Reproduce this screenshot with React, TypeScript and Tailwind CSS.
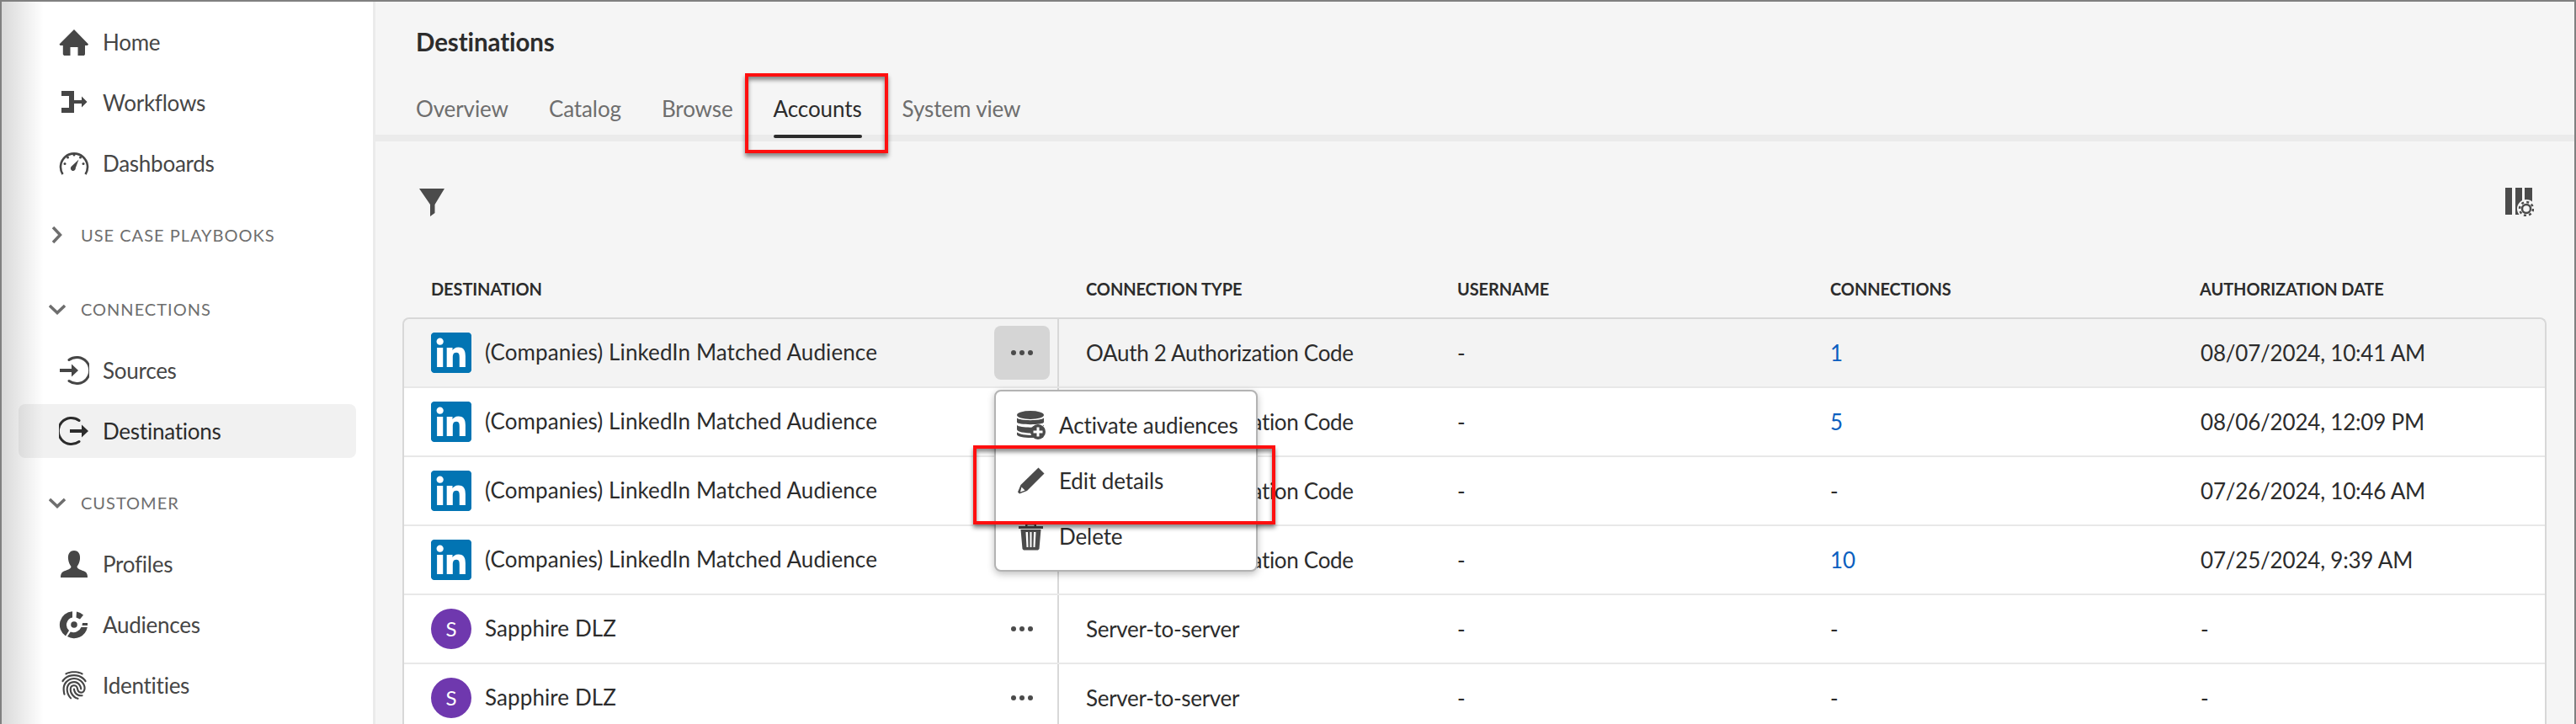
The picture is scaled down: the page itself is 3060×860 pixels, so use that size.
import { IoFingerPrint } from 'react-icons/io5';

const linkedinPath =
  'M20.447 20.452h-3.554v-5.569c0-1.328-.027-3.037-1.852-3.037-1.853 0-2.136 1.445-2.136 2.939v5.667H9.351V9h3.414v1.561h.046c.477-.9 1.637-1.85 3.37-1.85 3.601 0 4.267 2.37 4.267 5.455v6.286zM5.337 7.433c-1.144 0-2.063-.926-2.063-2.065 0-1.138.92-2.063 2.063-2.063 1.14 0 2.064.925 2.064 2.063 0 1.139-.925 2.065-2.064 2.065zm1.782 13.019H3.555V9h3.564v11.452zM22.225 0H1.771C.792 0 0 .774 0 1.729v20.542C0 23.227.792 24 1.771 24h20.451C23.2 24 24 23.227 24 22.271V1.729C24 .774 23.2 0 22.222 0h.003z';

function Icon({ children }: { children: React.ReactNode }) {
  return (
    <svg viewBox="0 0 36 36" className="w-9 h-9 shrink-0 fill-current">
      {children}
    </svg>
  );
}

const HomeIcon = () => (
  <Icon>
    <path d="M18 3 35 20.500 34 22H31V32.500L30 34H22.500V24H13.500V34H6L4.800 32.500V22H1.500L0.500 20.500Z" />
  </Icon>
);
const WorkflowIcon = () => (
  <Icon>
    <path d="M3 4H18V15H27V10.500L33.500 17 27 23.500V19H18V30H3V24H12V10H3Z" />
  </Icon>
);
const GaugeIcon = () => (
  <Icon>
    <path d="M4.500 31A16 16 0 1 1 31.500 31" fill="none" stroke="currentColor" strokeWidth="2.600" />
    <circle cx="18" cy="8" r="1.500" />
    <circle cx="10.500" cy="11" r="1.500" />
    <circle cx="25.500" cy="11" r="1.500" />
    <circle cx="7" cy="18.500" r="1.500" />
    <circle cx="29" cy="18.500" r="1.500" />
    <path d="M23.500 13.500 19.800 23.500A3 3 0 1 1 15 21.500Z" />
  </Icon>
);
const SourcesIcon = () => (
  <Icon>
    <path d="M12 5.500A15.500 15.500 0 1 1 12 30.500" fill="none" stroke="currentColor" strokeWidth="3" strokeLinecap="round" />
    <path d="M1 16H15V10.500L23 18 15 25.500V20H1Z" />
  </Icon>
);
const DestinationIcon = () => (
  <Icon>
    <path d="M24 5.500A15.500 15.500 0 1 0 24 30.500" fill="none" stroke="currentColor" strokeWidth="3" strokeLinecap="round" />
    <path d="M13 16H27V10.500L35 18 27 25.500V20H13Z" />
  </Icon>
);
const ProfileIcon = () => (
  <Icon>
    <path d="M18 2C23.500 2 25.500 6.500 25 12 24.600 16 23 19 21.500 21 21.500 24 27 25 31 27 33.500 28.500 34 31 34 34H2C2 31 2.500 28.500 5 27 9 25 14.500 24 14.500 21 13 19 11.400 16 11 12 10.500 6.500 12.500 2 18 2Z" />
  </Icon>
);
const AudienceIcon = () => (
  <Icon>
    <path d="M16 2.200V9.500A9 9 0 0 0 12 25L8 31.500A16 16 0 0 1 16 2.200Z" />
    <path d="M21 2.500A16 16 0 0 1 29 6.500L25 11.500 20.500 9.500Z" />
    <path d="M28 16H34V19H27.500ZM33.800 21A16 16 0 0 1 10 32L13.800 26.500A10 10 0 0 0 26.500 21Z" />
    <circle cx="18" cy="18" r="3.800" />
  </Icon>
);

function Ellipsis() {
  return (
    <span className="flex items-center gap-[4px] text-[#4b4b4b]">
      <span className="w-[6px] h-[6px] rounded-full bg-current" />
      <span className="w-[6px] h-[6px] rounded-full bg-current" />
      <span className="w-[6px] h-[6px] rounded-full bg-current" />
    </span>
  );
}

function NavItem({ label, icon, active }: { label: string; icon: React.ReactNode; active?: boolean }) {
  return (
    <div className="h-[72px] mx-[20px] flex items-center">
      <div
        className={`w-full h-[64px] rounded-lg flex items-center gap-[16px] pl-[48px] tracking-[-0.25px] ${
          active ? 'bg-[#f1f1f1] text-[#2c2c2c]' : 'text-[#464646]'
        }`}
      >
        {icon}
        <span>{label}</span>
      </div>
    </div>
  );
}

function SectionHead({ label, open }: { label: string; open?: boolean }) {
  return (
    <div className="h-[30px] flex items-center text-[#6e6e6e] text-[20px] tracking-[1px]">
      <span className="w-[94px] flex justify-end pr-[18px]">
        <svg viewBox="0 0 20 20" className="w-5 h-5 fill-none stroke-current stroke-[3.500]">
          {open ? <path d="M1 6 10 14.500 19 6" /> : <path d="M5 1 13.500 10 5 19" />}
        </svg>
      </span>
      <span>{label}</span>
    </div>
  );
}

function Sidebar() {
  return (
    <aside className="w-[441px] h-full shrink-0 bg-white pt-[12px] text-[26px]">
      <NavItem label="Home" icon={<HomeIcon />} />
      <NavItem label="Workflows" icon={<WorkflowIcon />} />
      <NavItem label="Dashboards" icon={<GaugeIcon />} />
      <div className="mt-[34px]">
        <SectionHead label="USE CASE PLAYBOOKS" open={false} />
      </div>
      <div className="mt-[58px] mb-[22px]">
        <SectionHead label="CONNECTIONS" open />
      </div>
      <NavItem label="Sources" icon={<SourcesIcon />} />
      <NavItem label="Destinations" icon={<DestinationIcon />} active />
      <div className="mt-[34px] mb-[22px]">
        <SectionHead label="CUSTOMER" open />
      </div>
      <NavItem label="Profiles" icon={<ProfileIcon />} />
      <NavItem label="Audiences" icon={<AudienceIcon />} />
      <NavItem
        label="Identities"
        icon={
          <span className="w-9 h-9 shrink-0 flex items-center justify-center text-[36px]">
            <IoFingerPrint />
          </span>
        }
      />
    </aside>
  );
}

type Row = {
  kind: 'linkedin' | 'sapphire';
  name: string;
  type: string;
  connections: string;
  date: string;
};

const auth = 'OAuth 2 Authorization Code';
const rows: Row[] = [
  { kind: 'linkedin', name: '(Companies) LinkedIn Matched Audience', type: auth, connections: '1', date: '08/07/2024, 10:41 AM' },
  { kind: 'linkedin', name: '(Companies) LinkedIn Matched Audience', type: auth, connections: '5', date: '08/06/2024, 12:09 PM' },
  { kind: 'linkedin', name: '(Companies) LinkedIn Matched Audience', type: auth, connections: '-', date: '07/26/2024, 10:46 AM' },
  { kind: 'linkedin', name: '(Companies) LinkedIn Matched Audience', type: auth, connections: '10', date: '07/25/2024, 9:39 AM' },
  { kind: 'sapphire', name: 'Sapphire DLZ', type: 'Server-to-server', connections: '-', date: '-' },
  { kind: 'sapphire', name: 'Sapphire DLZ', type: 'Server-to-server', connections: '-', date: '-' },
];

const gridCols = 'grid grid-cols-[778px_441px_443px_439px_1fr]';

function TableRow({ row, first }: { row: Row; first: boolean }) {
  return (
    <div
      className={`${gridCols} h-[82px] border-b-2 border-[#e8e8e8] items-stretch ${
        first ? 'bg-[#f3f3f3] rounded-t-lg' : 'bg-white'
      }`}
    >
      <div className="flex items-center pl-[32px] pr-[9px] border-r-2 border-[#d8d8d8]">
        {row.kind === 'linkedin' ? (
          <svg viewBox="0 0 24 24" className="w-12 h-12 shrink-0 bg-white rounded-[3px]">
            <path d={linkedinPath} fill="#0274b3" />
          </svg>
        ) : (
          <span className="w-12 h-12 shrink-0 rounded-full bg-[#6f38ae] text-white flex items-center justify-center text-[24px]">
            S
          </span>
        )}
        <span className="ml-[16px] flex-1 tracking-[0.1px] pb-[1px]">{row.name}</span>
        <span
          className={`w-[66px] h-[64px] rounded-lg flex items-center justify-center ${
            first ? 'bg-[#d5d5d5]' : ''
          }`}
        >
          <Ellipsis />
        </span>
      </div>
      <div className="flex items-center pl-[32px] tracking-[-0.3px]">{row.type}</div>
      <div className="flex items-center pl-[32px]">-</div>
      <div className={`flex items-center pl-[32px] ${row.connections === '-' ? '' : 'text-[#0b5fc0]'}`}>
        {row.connections}
      </div>
      <div className="flex items-center pl-[33px] tracking-[-0.2px]">{row.date}</div>
    </div>
  );
}

function Main() {
  const headers = ['Destination', 'Connection type', 'Username', 'Connections', 'Authorization date'];
  return (
    <main className="flex-1 min-w-0 h-full bg-[#f5f5f5] border-l-[3px] border-[#ebebeb] text-[#2c2c2c]">
      <header className="h-[166px] border-b-[8px] border-[#ebebeb] pl-[48px] relative">
        <h1 className="pt-[29px] h-[109px] text-[29.5px] font-bold leading-[38px] tracking-[-0.1px]">Destinations</h1>
        <nav className="flex gap-12 text-[26px] leading-[36px] text-[#6e6e6e] tracking-[-0.1px]">
          <span>Overview</span>
          <span>Catalog</span>
          <span>Browse</span>
          <span className="relative text-[#2c2c2c]">
            Accounts
            <span className="absolute left-0 right-0 top-[49px] h-1 rounded-sm bg-[#2c2c2c]" />
          </span>
          <span>System view</span>
        </nav>
      </header>
      <div className="h-[89px] flex items-end justify-between pl-[52px] pr-[48px]">
        <svg viewBox="0 0 30 33" className="w-[30px] h-[33px] fill-[#4b4b4b]">
          <path d="M0 0H30L18.500 19V29L13 33V19Z" />
        </svg>
        <svg viewBox="0 0 34 34" className="w-[34px] h-[34px] fill-[#4b4b4b]">
          <rect x="0" y="0" width="8" height="32" />
          <rect x="12" y="0" width="8" height="32" />
          <rect x="23" y="0" width="9" height="32" />
          <circle cx="25" cy="25" r="11" fill="#f5f5f5" />
          <circle cx="25" cy="25" r="5" fill="none" stroke="#4b4b4b" strokeWidth="2.500" />
          <circle cx="25" cy="25" r="8" fill="none" stroke="#4b4b4b" strokeWidth="2.500" strokeDasharray="3 3.280" />
        </svg>
      </div>
      <div className="ml-[32px] mr-[33px] mt-[66px]">
        <div className={`${gridCols} h-[40px] px-[2px] items-center text-[20px] font-bold uppercase tracking-[-0.1px]`}>
          {headers.map((h) => (
            <div key={h} className="pl-[32px]">
              {h}
            </div>
          ))}
        </div>
        <div className="mt-[14px] border-2 border-b-0 border-[#d8d8d8] rounded-t-lg text-[26px]">
          {rows.map((r, i) => (
            <TableRow key={i} row={r} first={i === 0} />
          ))}
        </div>
      </div>
    </main>
  );
}

function ActionMenu() {
  return (
    <div className="absolute left-[1179px] top-[461px] w-[313px] h-[216px] bg-white border-2 border-[#b3b3b3] rounded-lg shadow-[0_3px_8px_rgba(0,0,0,0.25)] pt-[7px] text-[26px] text-[#2c2c2c] tracking-[-0.1px]">
      <div className="h-[66px] flex items-center gap-[15px] pl-[24px]">
        <svg viewBox="0 0 36 36" className="w-9 h-9 shrink-0 fill-[#4b4b4b]">
          <ellipse cx="17" cy="6" rx="16" ry="5" />
          <path d="M1 9.500C4 13 30 13 33 9.500V14.500C33 18 1 18 1 14.500ZM1 18C4 21.500 30 21.500 33 18V19C24 21 20 25 19.500 27.500 10 27.500 1 26 1 23ZM1 26.500C4 29 12 30 19.500 30 20 31 20.500 32 21.500 33 12 33.500 1 32 1 29Z" />
          <circle cx="26" cy="26" r="9" />
          <path d="M24.500 20.500H27.500V24.500H31.500V27.500H27.500V31.500H24.500V27.500H20.500V24.500H24.500Z" fill="#fff" />
        </svg>
        <span>Activate audiences</span>
      </div>
      <div className="h-[66px] flex items-center gap-[15px] pl-[24px]">
        <svg viewBox="0 0 36 36" className="w-9 h-9 shrink-0 fill-[#4b4b4b]">
          <path d="M26.500 2.500 33.500 9.500 13 30 4 33.500 2 31.500 5.500 23Z" />
          <path d="M6.500 25.500 10.500 29.500 5 31.500Z" fill="#fff" />
        </svg>
        <span>Edit details</span>
      </div>
      <div className="h-[66px] flex items-center gap-[15px] pl-[24px]">
        <svg viewBox="0 0 36 36" className="w-9 h-9 shrink-0 fill-[#4b4b4b]">
          <path d="M11 2.500H24V6H32V9H3V6H11ZM13.500 4.500V6H21.500V4.500Z" fillRule="evenodd" />
          <path d="M5.500 10H29.500L27.500 33 26 34.500H9L7.500 33ZM11.500 13 12.500 31H14.500L14 13ZM16.500 13V31H18.500V13ZM21 13 20.500 31H22.500L23.500 13Z" fillRule="evenodd" />
        </svg>
        <span>Delete</span>
      </div>
    </div>
  );
}

export default function App() {
  return (
    <div className="relative w-[3060px] h-[860px] overflow-hidden flex border-t-2 border-x-2 border-[#808080] font-[Lato,sans-serif] bg-white">
      <Sidebar />
      <Main />
      <ActionMenu />
      <div className="absolute left-0 top-0 bottom-0 w-[50px] bg-gradient-to-r from-black/15 to-transparent pointer-events-none" />
      <div className="absolute left-[883px] top-[85px] w-[170px] h-[95px] border-4 border-[#ff0f0f] shadow-[0_4px_5px_rgba(0,0,0,0.45),inset_0_4px_5px_rgba(0,0,0,0.45)]" />
      <div className="absolute left-[1154px] top-[527px] w-[359px] h-[94px] border-4 border-[#ff0f0f] shadow-[0_4px_5px_rgba(0,0,0,0.45),inset_0_4px_5px_rgba(0,0,0,0.45)]" />
    </div>
  );
}
